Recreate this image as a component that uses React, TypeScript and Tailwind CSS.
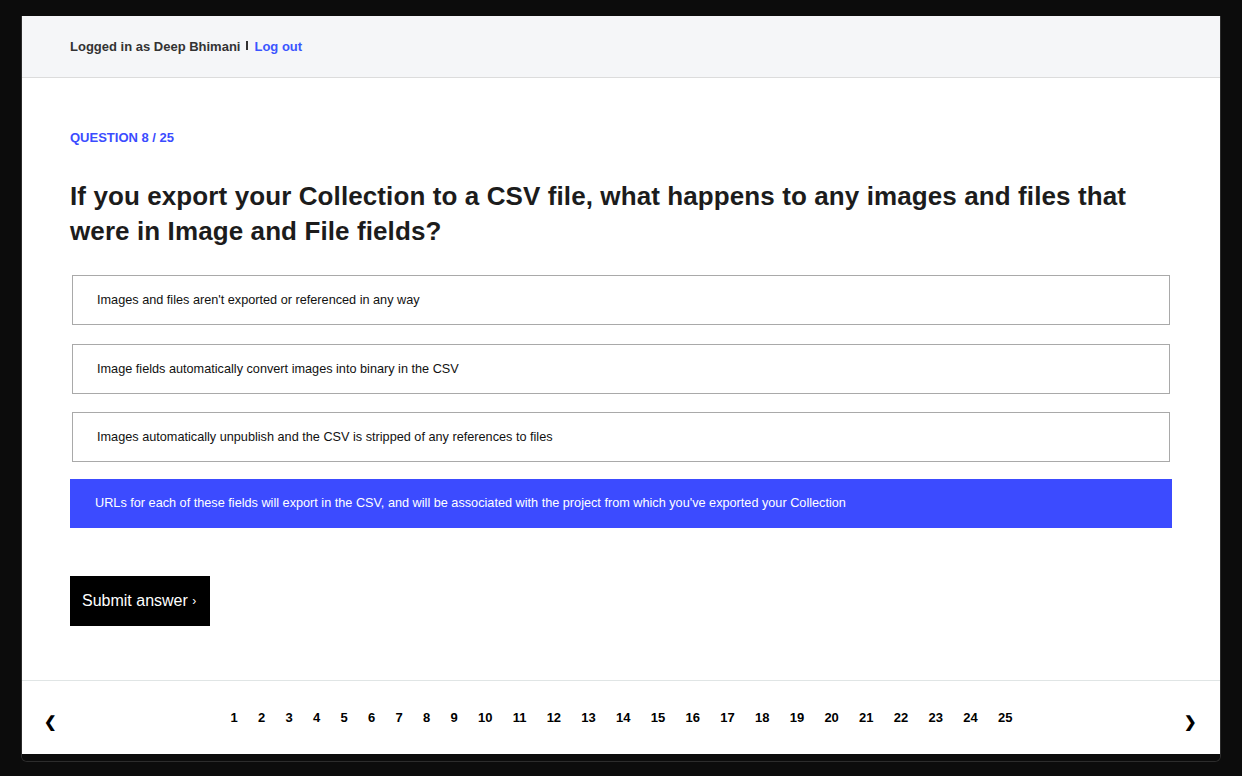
import React from "react";

const options = [
  "Images and files aren't exported or referenced in any way",
  "Image fields automatically convert images into binary in the CSV",
  "Images automatically unpublish and the CSV is stripped of any references to files",
  "URLs for each of these fields will export in the CSV, and will be associated with the project from which you've exported your Collection",
];

const gaps = ["mt-0", "mt-[19px]", "mt-[18px]", "mt-[17px]"];

export default function App() {
  const selected = 3;
  const pages = Array.from({ length: 25 }, (_, i) => i + 1);
  return (
    <div
      className="w-[1242px] h-[776px] bg-[#0c0c0c] pt-4 pl-[21px] overflow-hidden"
      style={{ fontFamily: '"Liberation Sans", Arial, sans-serif' }}
    >
      <div className="w-[1200px] h-[746px] border-x border-b border-[#2c2c2c] rounded-b-[6px] flex flex-col overflow-hidden">
        <div className="h-[62px] shrink-0 bg-[#f5f6f8] border-b border-[#dcdcdc] flex items-center pl-[48px] text-[13px] font-bold text-[#333]">
          <span>Logged in as Deep Bhimani</span>
          <span className="mx-[6px] inline-block w-[2px] h-[9px] bg-[#333] -mt-[3px]" />
          <span className="text-[#3b55ff]">Log out</span>
        </div>
        <div className="bg-white flex-1 flex flex-col px-[48px] pt-[52px]">
          <div className="text-[13px] leading-[16px] font-bold text-[#3b4cff] uppercase">
            Question 8 / 25
          </div>
          <h1 className="mt-[33px] text-[26px] leading-[35px] font-bold text-[#1c1c1c] tracking-[0.1px]">
            If you export your Collection to a CSV file, what happens to any images and files that were in Image and File fields?
          </h1>
          <div className="mt-[26px] flex flex-col">
            {options.map((o, i) =>
              i === selected ? (
                <div
                  key={i}
                  className={`${gaps[i]} h-[49px] bg-[#3c4bff] text-white text-[12.7px] flex items-center px-[25px] pt-[1px]`}
                >
                  {o}
                </div>
              ) : (
                <div
                  key={i}
                  className={`${gaps[i]} h-[50px] mx-[2px] border border-[#a9a9a9] text-[#111] text-[12.7px] flex items-center px-[24px] pt-[1px]`}
                >
                  {o}
                </div>
              )
            )}
          </div>
          <div className="mt-[48px]">
            <button className="h-[50px] w-[140px] bg-black text-white text-[16px] text-left pl-[12px]">
              Submit answer <span className="text-[12px] relative -top-[1px]">›</span>
            </button>
          </div>
        </div>
        <div className="h-[74px] shrink-0 bg-white border-t border-[#e0e5e5] relative flex justify-center pt-[29px]">
          <span className="absolute left-[22px] top-[30px] text-[15px] font-bold text-black">❮</span>
          <div className="flex gap-[20.25px] text-[13px] leading-[16px] font-bold text-black h-[16px] ml-[1px]">
            {pages.map((p) => (
              <span key={p}>{p}</span>
            ))}
          </div>
          <span className="absolute right-[23px] top-[30px] text-[15px] font-bold text-black">❯</span>
        </div>
        <div className="h-[7px] shrink-0 bg-[#0c0c0c]" />
      </div>
    </div>
  );
}
